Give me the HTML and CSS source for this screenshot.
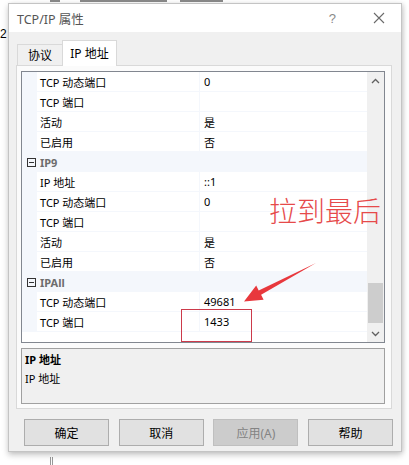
FILE: index.html
```html
<!DOCTYPE html>
<html lang="zh-CN">
<head>
<meta charset="utf-8">
<title>TCP/IP 属性</title>
<link rel="stylesheet" href="styles.css">
</head>
<body>
<div class="page">
  <div class="behind"><div class="frag f1"></div><div class="frag f2"></div><div class="frag f3"></div></div>
  <div class="main">
    <div class="left-edge"><span class="digit">2</span></div>
    <div class="window">
      <div class="titlebar">
        <span class="title">TCP/IP 属性</span>
        <span class="help">?</span>
        <svg class="close" width="12" height="12" viewBox="0 0 12 12"><path d="M1 1 L11 11 M11 1 L1 11" stroke="#6a6a6a" stroke-width="1.1" fill="none"/></svg>
      </div>
      <div class="body">
        <div class="tabs">
          <div class="tab">协议</div>
          <div class="tab selected">IP 地址</div>
        </div>
        <div class="panel">
          <div class="grid">
            <div class="rows">
              <div class="row"><div class="gut"></div><div class="name">TCP 动态端口</div><div class="val">0</div></div>
              <div class="row"><div class="gut"></div><div class="name">TCP 端口</div><div class="val"></div></div>
              <div class="row"><div class="gut"></div><div class="name">活动</div><div class="val">是</div></div>
              <div class="row"><div class="gut"></div><div class="name">已启用</div><div class="val">否</div></div>
              <div class="row cat"><div class="gut"><span class="minus"></span></div><div class="catname">IP9</div></div>
              <div class="row"><div class="gut"></div><div class="name">IP 地址</div><div class="val">::1</div></div>
              <div class="row"><div class="gut"></div><div class="name">TCP 动态端口</div><div class="val">0</div></div>
              <div class="row"><div class="gut"></div><div class="name">TCP 端口</div><div class="val"></div></div>
              <div class="row"><div class="gut"></div><div class="name">活动</div><div class="val">是</div></div>
              <div class="row"><div class="gut"></div><div class="name">已启用</div><div class="val">否</div></div>
              <div class="row cat"><div class="gut"><span class="minus"></span></div><div class="catname">IPAll</div></div>
              <div class="row"><div class="gut"></div><div class="name">TCP 动态端口</div><div class="val">49681</div></div>
              <div class="row"><div class="gut"></div><div class="name">TCP 端口</div><div class="val">1433</div></div>
              <div class="filler"></div>
            </div>
            <div class="scrollbar">
              <div class="sb-btn"><svg width="9" height="6" viewBox="0 0 9 6"><path d="M1 5 L4.5 1.5 L8 5" stroke="#606060" stroke-width="1.3" fill="none"/></svg></div>
              <div class="sb-track"><div class="sb-thumb"></div></div>
              <div class="sb-btn"><svg width="9" height="6" viewBox="0 0 9 6"><path d="M1 1 L4.5 4.5 L8 1" stroke="#606060" stroke-width="1.3" fill="none"/></svg></div>
            </div>
          </div>
          <div class="desc">
            <div class="desc-title">IP 地址</div>
            <div class="desc-text">IP 地址</div>
          </div>
        </div>
        <div class="buttons">
          <div class="btn">确定</div>
          <div class="btn">取消</div>
          <div class="btn disabled">应用(A)</div>
          <div class="btn">帮助</div>
        </div>
      </div>
    </div>
  </div>
  <div class="below"><div class="vline"></div></div>

  <div class="note">拉到最后</div>
  <svg class="arrow" width="409" height="465" viewBox="0 0 409 465"><polygon points="316,263 261.1,294.8 263.6,299.7 244,301.5 256.2,285.5 258.7,290.4" fill="#e8383d"/></svg>
  <div class="redbox"></div>
</div>
</body>
</html>
```
FILE: styles.css
```css
* { box-sizing: border-box; }
html, body { margin: 0; padding: 0; background: #ffffff; }
body { font-family: "Noto Sans", "Noto Sans CJK SC", sans-serif; font-size: 11px; color: #000; }
.page { position: relative; width: 409px; height: 465px; overflow: hidden; background: #ffffff; }

.behind { height: 3px; display: flex; align-items: flex-start; }
.frag { height: 2px; background: #555; opacity: 0.7; }
.f1 { margin-left: 50px; width: 10px; }
.f2 { margin-left: 20px; width: 87px; }
.f3 { margin-left: 13px; width: 43px; }

.main { display: flex; height: 449px; }
.left-edge { width: 8px; padding-top: 23px; flex: none; }
.digit { font-family: "Liberation Sans", sans-serif; font-size: 12px; line-height: 14px; }

.window { width: 394px; height: 449px; border: 1px solid #c4c4c4; background: #f0f0f0; display: flex; flex-direction: column; box-shadow: 0 3px 6px rgba(0,0,0,0.22), 2px 0 4px rgba(0,0,0,0.08); }
.titlebar { height: 28px; background: #ffffff; display: flex; align-items: center; padding-left: 8px; flex: none; }
.title { font-size: 12.5px; color: #555; flex: 1; }
.help { font-family: "Liberation Sans", sans-serif; font-size: 13px; color: #8a8a8a; margin-right: 37px; }
.close { margin-right: 16px; }

.body { flex: 1; padding: 8px 0 0 7px; display: flex; flex-direction: column; }
.tabs { display: flex; align-items: flex-end; height: 25px; padding-left: 1px; position: relative; z-index: 1; }
.tab { height: 21px; width: 46px; border: 1px solid #d9d9d9; border-bottom: none; background: #f0f0f0; font-size: 12px; display: flex; align-items: center; justify-content: center; }
.tab.selected { height: 26px; width: 55px; background: #ffffff; margin-bottom: -1px; margin-left: -1px; padding-bottom: 1px; }

.panel { width: 376px; height: 344px; border: 1px solid #d9d9d9; background: #fbfbfb; padding: 5px 0 0 4px; display: flex; flex-direction: column; gap: 5px; }
.grid { width: 364px; height: 272px; border: 1px solid #828790; display: flex; background: #fff; }
.rows { flex: 1; display: flex; flex-direction: column; }
.row { display: flex; height: 20px; flex: none; }
.gut { width: 15px; background: #f4f7fc; display: flex; align-items: center; justify-content: center; flex: none; }
.name { width: 163px; border-bottom: 1px solid #f4f7fc; border-right: 1px solid #f4f7fc; padding-left: 3px; display: flex; align-items: center; white-space: nowrap; flex: none; }
.val { flex: 1; border-bottom: 1px solid #f4f7fc; padding-left: 4px; display: flex; align-items: center; }
.cat { background: #f4f7fc; }
.catname { flex: 1; font-weight: bold; color: #6d6d6d; padding-left: 3px; display: flex; align-items: center; }
.minus { width: 9px; height: 9px; border: 1px solid #333; position: relative; margin-left: 3px; }
.minus::after { content: ""; position: absolute; left: 1px; right: 1px; top: 3px; height: 1px; background: #333; }
.filler { flex: 1; }

.scrollbar { width: 17px; background: #f0f0f0; display: flex; flex-direction: column; flex: none; }
.sb-btn { height: 17px; display: flex; align-items: center; justify-content: center; flex: none; }
.sb-track { flex: 1; padding: 194px 1px 0 1px; }
.sb-thumb { height: 40px; background: #cdcdcd; }

.desc { width: 364px; height: 56px; border: 1px solid #a0a0a0; background: #f0f0f0; padding: 1px 3px; }
.desc-title { font-weight: bold; height: 19px; line-height: 19px; }
.desc-text { height: 19px; line-height: 19px; }

.buttons { display: flex; justify-content: space-between; width: 369px; margin-left: 8px; margin-top: 10px; }
.btn { width: 85px; height: 27px; background: #e1e1e1; border: 1px solid #adadad; font-size: 12px; display: flex; align-items: center; justify-content: center; }
.btn.disabled { background: #cccccc; border-color: #bfbfbf; color: #838383; }

.below { height: 13px; padding: 5px 0 0 50px; }
.vline { width: 3px; height: 8px; border-left: 1px solid #999; border-right: 1px solid #999; }

.note { position: absolute; left: 269px; top: 190px; font-family: "Noto Sans CJK SC", sans-serif; font-weight: 300; font-size: 28px; line-height: 40px; color: #e64a4a; }
.arrow { position: absolute; left: 0; top: 0; pointer-events: none; }
.redbox { position: absolute; left: 181px; top: 309px; width: 71px; height: 33px; border: 1px solid #cc3a4a; }
```
